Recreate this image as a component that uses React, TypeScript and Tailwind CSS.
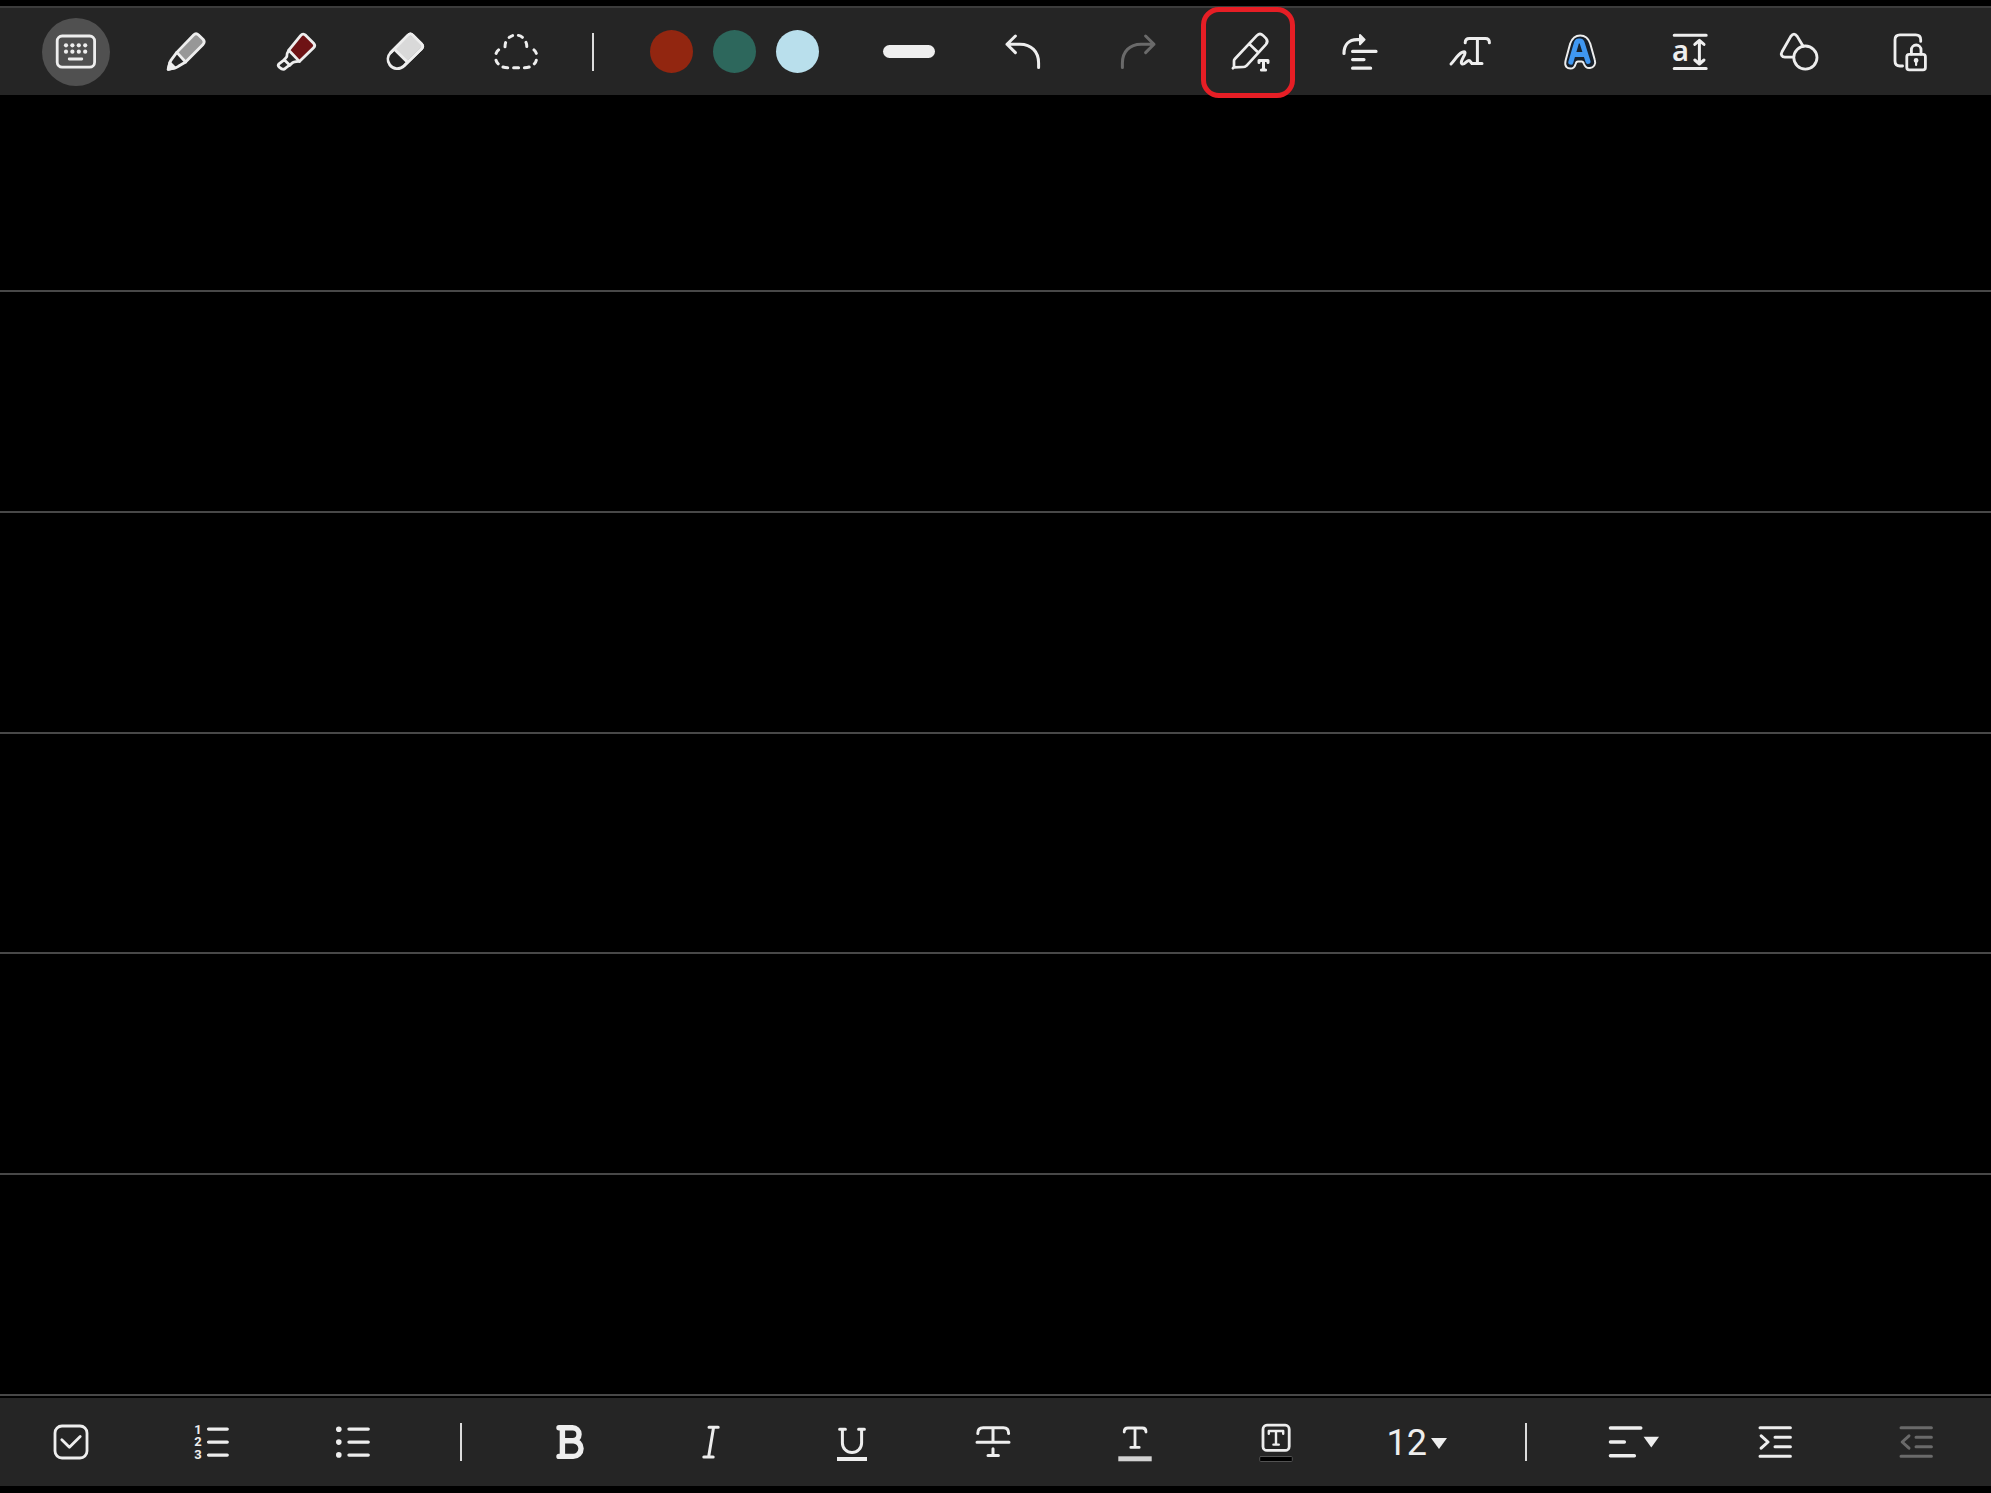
import { useState, type ReactNode } from 'react';

interface IconProps {
  children: ReactNode;
  weight?: number;
}

// All toolbar icons share a 48px canvas
function Icon({ children, weight = 3 }: IconProps) {
  return (
    <svg
      viewBox="0 0 48 48"
      className="w-12 h-12 shrink-0"
      fill="none"
      stroke="currentColor"
      strokeWidth={weight}
      strokeLinecap="round"
      strokeLinejoin="round"
      aria-hidden="true"
    >
      {children}
    </svg>
  );
}

interface ToolButtonProps {
  label: string;
  children: ReactNode;
  active?: boolean;
  disabled?: boolean;
  highlighted?: boolean;
  onClick?: () => void;
}

function ToolButton({ label, children, active, disabled, highlighted, onClick }: ToolButtonProps) {
  return (
    <button
      type="button"
      aria-label={label}
      disabled={disabled}
      onClick={onClick}
      className={`relative w-[68px] h-[68px] flex items-center justify-center rounded-full disabled:text-[#6a6a6a] ${
        active ? 'bg-[#505050]' : ''
      }`}
    >
      {children}
      {highlighted && (
        <span className="absolute -inset-x-[13px] -top-[11px] -bottom-3 -translate-x-0.5 border-[5px] border-[#e61e25] rounded-[18px] pointer-events-none" />
      )}
    </button>
  );
}

function Divider() {
  return <span className="w-0.5 h-[38px] bg-[#dcdcdc]" />;
}

const KeyboardIcon = () => (
  <Icon weight={2.8}>
    <rect x="5.2" y="8" width="37.4" height="31.2" rx="5" />
    <g fill="currentColor" stroke="none">
      {[14, 20.4, 26.8, 33.2].map((x) => (
        <g key={x}>
          <circle cx={x} cy="17.3" r="2.1" />
          <circle cx={x} cy="23.7" r="2.1" />
        </g>
      ))}
    </g>
    <path d="M17.2 31H29.8" />
  </Icon>
);

const PenIcon = () => (
  <Icon weight={2.8}>
    <path d="M14.8 24.4 31.6 7Q34 4.6 36.6 7L41 11.3Q43.4 14 41 16.5L23.6 34Z" fill="#979797" />
    <path d="M14.8 24.4 8.9 32.4Q7.8 34 7.5 35.8L6.2 41.4 12 40.2Q14.4 39.6 16.4 38.3L23.6 34" />
    <path d="M6.2 41.4 7.8 34.8 13 40Z" fill="currentColor" />
  </Icon>
);

const HighlighterIcon = () => (
  <Icon weight={2.8}>
    <path d="M16.8 22.2 28.6 7.6Q31 4.8 33.8 7.4L41.6 15.2Q43.8 17.6 41.6 19.8L27.4 33.4Z" fill="#6e1315" />
    <path d="M16.8 22.2Q14.8 25 14.8 28.6L12.2 31.8M27.4 33.4Q21.5 33.2 19.6 35.6L17.6 37.6" />
    <path d="M12.2 31.8 7 35.8Q5.4 37.6 7.2 39.2L9.8 41Q11.8 41.8 13.2 40.4L17.6 37Z" />
  </Icon>
);

const EraserIcon = () => (
  <Icon weight={2.8}>
    <path d="M26 7.2Q28.4 4.8 30.8 7.2L39.6 15.9Q41.8 18.3 39.6 20.7L22.4 37.6C17.6 42 11 41.4 7.8 36.9C5 33 5.4 28 8.8 24.4Z" />
    <path d="M12.6 21.4 26.8 8Q28.4 6.6 30 8L38.9 16.8Q40.2 18.3 38.8 19.9L24.8 33.4Z" fill="#d9d9d9" stroke="#bdbdbd" strokeWidth="1" />
    <path d="M12.6 21.4 24.8 33.6" />
    <path d="M8.8 24.4 26 7.2Q28.4 4.8 30.8 7.2L39.6 15.9Q41.8 18.3 39.6 20.7L22.4 37.6" />
  </Icon>
);

const LassoIcon = () => (
  <Icon weight={3}>
    <path d="M17.2 9.5Q18.6 8.2 20.6 7.6M26.4 7.4Q28.8 7.9 30.4 9.3M34 14.4Q34.8 16 34.8 18.6M13.6 14.6Q13 16.4 13 18.7" />
    <path d="M6.6 21.9Q4.9 23.2 4.1 25.4M42 21.9Q43.7 23.2 44.3 25.4M4 32.2Q4.5 34.4 6.2 35.8M44.3 32.2Q43.9 34.4 42.3 35.8" />
    <path d="M11 39Q13 39.7 15.7 39.7M21.6 39.7H26.6M32.4 39.7Q35.4 39.7 37.2 39" />
  </Icon>
);

const UndoIcon = () => (
  <Icon weight={3}>
    <path d="M39.6 39.4V35C39.6 23.8 32.4 16.2 21 16.2H8M16.4 8 8 16.2 16.4 24.6" />
  </Icon>
);

const RedoIcon = () => (
  <Icon weight={3}>
    <path d="M8.4 39.4V35C8.4 23.8 15.6 16.2 27 16.2H40M31.6 8 40 16.2 31.6 24.6" />
  </Icon>
);

const PenToTextIcon = () => (
  <Icon weight={2.7}>
    <path d="M8.8 31 31 7.4Q34 4.6 37 7.4L40 10.4Q42.6 13.4 40 16.4L20.4 37.8Q19 39 17.2 39L8 39.4V33Q8 31.8 8.8 31ZM23 15.6 31.4 23.8M6.9 40.3 8.4 38.8" />
    <path d="M33 34.6V32.6H42V34.6M37.5 33V42M35.4 42H39.6" strokeWidth="3" />
  </Icon>
);

const StraightenIcon = () => (
  <Icon weight={3.2}>
    <path d="M8 25.4C8 17 13 11.8 21 11.7H25M16.6 23.4H40M16.6 31.6H28M16.6 40.2H34.6" />
    <path d="M24 7 28.6 11.6 24 16.4Z" fill="currentColor" strokeWidth="2" />
  </Icon>
);

const HandwritingIcon = () => (
  <Icon weight={3}>
    <path d="M19.2 14.7Q19.2 10.4 23.4 10.4H39.4Q43.4 10.4 43.4 14.7M31.4 10.4V35.6" />
    <path d="M5 36C8.4 32.6 11.4 26.6 16 24.4C19.2 23 19.6 24.2 18.6 26.6C16.8 30.4 13.8 34.8 16.2 36C18.6 37 20.8 32.4 23 32.4C24.8 32.4 24.2 35.6 27 35.6H36" />
  </Icon>
);

const TextStyleIcon = () => (
  <Icon>
    <path
      d="M24.2 7.4C19 7.4 16 10.5 14.2 15.5L9.6 32.5C8 38.5 11.5 40.6 14.5 40.6C17.5 40.6 18.8 38.8 19.6 36Q20.2 33.4 22 33.4H25.6Q27.2 33.4 28 36C29 38.8 31 40.4 34 40C37.5 39.5 40.3 36.5 38.8 32L34.2 15.5C32.5 10.5 29.5 7.4 24.2 7.4Z"
      fill="#17202b"
      strokeWidth="2"
    />
    <path d="M14.8 34.2 20.6 14.4Q21.2 13 22.6 13H24Q25.4 13 26 14.4L32 33.4M18 26.4H29" stroke="#3f97f2" strokeWidth="5" />
  </Icon>
);

const LineSpacingIcon = () => (
  <Icon weight={3}>
    <path d="M8.2 7.2H40.2M8.2 40.4H40.2M33.4 13V35.4M28.8 16.4 33.4 12.4 38 16.4M28.8 32 33.4 36 38 32" />
    <text x="6" y="33" fill="currentColor" stroke="none" className="font-['Noto_Sans',sans-serif] text-[29px] font-semibold">
      a
    </text>
  </Icon>
);

const ShapesIcon = () => (
  <Icon weight={2.8}>
    <circle cx="29.4" cy="29.6" r="11.6" />
    <path d="M17.4 29.2H9C5.8 29.2 4.4 26.4 6 23.8L14.8 8.4Q18 4 21.2 8.4L27 18" />
  </Icon>
);

const PageLockIcon = () => (
  <Icon weight={2.8}>
    <path d="M16.6 38H14Q9 38 9 33V11.7Q9 6.8 14 6.8H29.7Q34.7 6.8 34.7 11.7V13.4" />
    <rect x="20.8" y="26.4" width="18.6" height="15.4" rx="2.4" />
    <path d="M25.4 26.2V21.8A4.8 4.8 0 0 1 35 21.8V26.2" />
    <circle cx="30.1" cy="32.4" r="1.6" fill="currentColor" strokeWidth="1.6" />
    <path d="M30.1 33V37" strokeWidth="2.2" />
  </Icon>
);

const CheckboxIcon = () => (
  <Icon weight={2.8}>
    <rect x="8" y="8" width="32" height="32" rx="7" />
    <path d="M14.8 21.8 22.4 29.2 33.2 18.4" />
  </Icon>
);

const NumberedListIcon = () => (
  <Icon weight={3.4}>
    <path d="M20.6 11.1H39.2M20.6 24.1H39.2M20.6 37.1H39.2" />
    <g fill="currentColor" stroke="none" textAnchor="middle" className="font-['Roboto',sans-serif] text-[13px] font-bold">
      <text x="10" y="15.8">1</text>
      <text x="10" y="28.4">2</text>
      <text x="10" y="41.4">3</text>
    </g>
  </Icon>
);

const BulletListIcon = () => (
  <Icon weight={3.4}>
    <path d="M20 11.1H39.2M20 24.1H39.2M20 37.1H39.2" />
    <g fill="currentColor" stroke="none">
      <circle cx="9.8" cy="11.3" r="2.8" />
      <circle cx="9.8" cy="24.1" r="2.8" />
      <circle cx="9.8" cy="36.9" r="2.8" />
    </g>
  </Icon>
);

const BoldIcon = () => (
  <Icon weight={5.4}>
    <path d="M13 9.8H26.6A6.45 6.45 0 0 1 26.6 22.7H16.4M26.6 22.7H27.2A7.85 7.85 0 0 1 27.2 38.4H13M16.4 9.8V38.4" />
  </Icon>
);

const ItalicIcon = () => (
  <Icon weight={3}>
    <path d="M22 9.2H31.2M16.8 39H26.2M26.6 9.2 21.6 39" />
  </Icon>
);

const UnderlineIcon = () => (
  <Icon weight={3}>
    <path d="M11.6 11.2H17.4M30.6 11.2H36.4M14.4 11.2V25A9.6 9.6 0 0 0 33.6 25V11.2" />
    <path d="M9 41H39" strokeWidth="4" strokeLinecap="butt" />
  </Icon>
);

const StrikethroughIcon = () => (
  <Icon weight={3}>
    <path d="M8.8 15.4Q8.8 9.8 14.2 9.8H34.4Q39.6 9.8 39.6 15.4M24 9.8V24M8 24.2H40M24 30.8V37.4M19 37.6H29.4" />
  </Icon>
);

const TextColorIcon = () => (
  <Icon weight={2.8}>
    <path d="M13.2 14Q13.2 10 17 10H31.4Q35 10 35 14M24 10V29.2M19.8 29.4H28.2" />
    <rect x="7.3" y="38.3" width="33.4" height="5" fill="#d2d2d2" stroke="none" />
  </Icon>
);

const TextBackgroundIcon = () => (
  <Icon weight={2.8}>
    <rect x="11" y="7.2" width="26.2" height="25.2" rx="4" />
    <path d="M16.8 15.8V13H31.2V15.8M24 13V26.4M21.4 26.6H26.8" strokeWidth="2.4" />
    <rect x="7.7" y="38.5" width="32.6" height="5" rx="1" fill="#000" stroke="#525252" strokeWidth="1" />
  </Icon>
);

const IndentIcon = () => (
  <Icon weight={3}>
    <path d="M9 9.8H39.4M9 38.2H39.4M24 19.2H39.4M24 28.7H39.4M10.2 17.8 17 24 10.2 30.2" />
  </Icon>
);

const OutdentIcon = () => (
  <Icon weight={3}>
    <path d="M9 9.8H39.4M9 38.2H39.4M24 19.2H39.4M24 28.7H39.4M17 17.8 10.2 24 17 30.2" />
  </Icon>
);

const penColors = [
  { name: 'Red', className: 'bg-[#922610]' },
  { name: 'Green', className: 'bg-[#2d675c]' },
  { name: 'Light blue', className: 'bg-[#b9dfec]' },
];

export default function App() {
  const [mode, setMode] = useState('keyboard');
  const [fontSize, setFontSize] = useState('12');

  return (
    <div className="min-h-screen flex flex-col bg-black text-[#eeeeee] pt-1.5 pb-[7px]">
      <header className="h-[89px] pl-[21px] pr-[26px] bg-[#252525] border-t-2 border-[#3c3c3c] grid grid-cols-[repeat(5,110fr)_44fr_239fr_110fr_116fr_114fr_repeat(7,110fr)] items-center justify-items-center">
        <ToolButton label="Keyboard" active={mode === 'keyboard'} onClick={() => setMode('keyboard')}>
          <KeyboardIcon />
        </ToolButton>
        <ToolButton label="Pen" active={mode === 'pen'} onClick={() => setMode('pen')}>
          <PenIcon />
        </ToolButton>
        <ToolButton label="Highlighter" active={mode === 'highlighter'} onClick={() => setMode('highlighter')}>
          <HighlighterIcon />
        </ToolButton>
        <ToolButton label="Eraser" active={mode === 'eraser'} onClick={() => setMode('eraser')}>
          <EraserIcon />
        </ToolButton>
        <ToolButton label="Selection" active={mode === 'selection'} onClick={() => setMode('selection')}>
          <LassoIcon />
        </ToolButton>
        <Divider />
        <div className="flex gap-5">
          {penColors.map((color) => (
            <button
              key={color.name}
              type="button"
              aria-label={color.name}
              className={`w-[43px] h-[43px] rounded-full ${color.className}`}
            />
          ))}
        </div>
        <ToolButton label="Line thickness">
          <span className="w-[52px] h-[13px] shrink-0 rounded-full bg-[#eeeeee]" />
        </ToolButton>
        <ToolButton label="Undo">
          <UndoIcon />
        </ToolButton>
        <ToolButton label="Redo" disabled>
          <RedoIcon />
        </ToolButton>
        <ToolButton label="Pen to text" highlighted>
          <PenToTextIcon />
        </ToolButton>
        <ToolButton label="Straighten">
          <StraightenIcon />
        </ToolButton>
        <ToolButton label="Convert handwriting to text">
          <HandwritingIcon />
        </ToolButton>
        <ToolButton label="Change style">
          <TextStyleIcon />
        </ToolButton>
        <ToolButton label="Line spacing">
          <LineSpacingIcon />
        </ToolButton>
        <ToolButton label="Shapes">
          <ShapesIcon />
        </ToolButton>
        <ToolButton label="Lock page">
          <PageLockIcon />
        </ToolButton>
      </header>

      {/* Ruled page */}
      <main className="grow flex flex-col mb-0.5">
        <div className="flex-[197] border-b-2 border-[#484848]" />
        {[1, 2, 3, 4, 5].map((row) => (
          <div key={row} className="flex-[221] border-b-2 border-[#484848]" />
        ))}
      </main>

      <footer className="h-[88px] pr-1 bg-[#252525] grid grid-cols-[repeat(3,141fr)_76fr_repeat(7,141fr)_76fr_repeat(3,141fr)] items-center justify-items-center">
        <ToolButton label="Checkbox">
          <CheckboxIcon />
        </ToolButton>
        <ToolButton label="Numbered list">
          <NumberedListIcon />
        </ToolButton>
        <ToolButton label="Bullet list">
          <BulletListIcon />
        </ToolButton>
        <Divider />
        <ToolButton label="Bold">
          <BoldIcon />
        </ToolButton>
        <ToolButton label="Italic">
          <ItalicIcon />
        </ToolButton>
        <ToolButton label="Underline">
          <UnderlineIcon />
        </ToolButton>
        <ToolButton label="Strikethrough">
          <StrikethroughIcon />
        </ToolButton>
        <ToolButton label="Text color">
          <TextColorIcon />
        </ToolButton>
        <ToolButton label="Text background">
          <TextBackgroundIcon />
        </ToolButton>
        <label className="flex items-center gap-1 pt-0.5">
          <select
            aria-label="Font size"
            value={fontSize}
            onChange={(e) => setFontSize(e.target.value)}
            className="appearance-none w-[41px] bg-transparent font-['Roboto',sans-serif] text-[36px] leading-[44px]"
          >
            {['8', '10', '12', '14', '16', '18', '20'].map((size) => (
              <option key={size} value={size}>
                {size}
              </option>
            ))}
          </select>
          <svg viewBox="0 0 16 11" className="w-4 h-[11px]" fill="currentColor" aria-hidden="true">
            <path d="M0 0H16L8 11Z" />
          </svg>
        </label>
        <Divider />
        <ToolButton label="Alignment">
          <svg viewBox="0 0 56 48" className="w-14 h-12 shrink-0" fill="none" stroke="currentColor" strokeWidth="3.4" strokeLinecap="round" aria-hidden="true">
            <path d="M4.4 10H34.8M4.4 24H18.4M4.4 37.8H28.4" />
            <path d="M37.6 18.8H53L45.3 29.4Z" fill="currentColor" stroke="none" />
          </svg>
        </ToolButton>
        <ToolButton label="Increase indent">
          <IndentIcon />
        </ToolButton>
        <ToolButton label="Decrease indent" disabled>
          <OutdentIcon />
        </ToolButton>
      </footer>
    </div>
  );
}
